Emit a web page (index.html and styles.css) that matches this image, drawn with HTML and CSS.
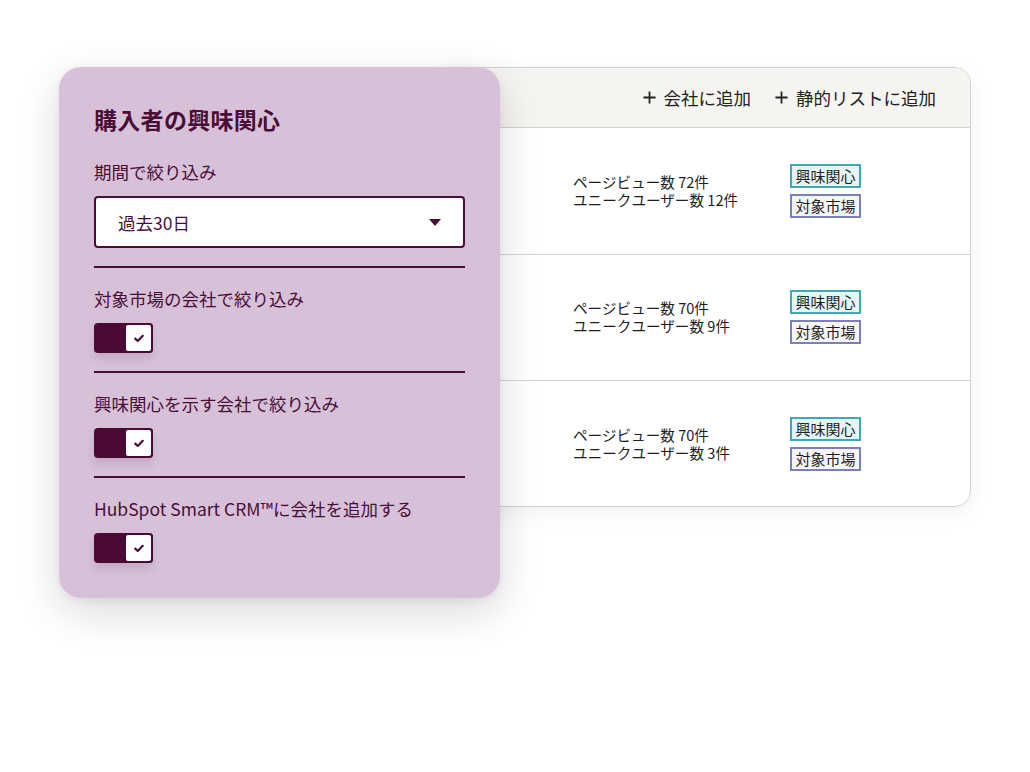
FILE: index.html
```html
<!DOCTYPE html>
<html lang="ja">
<head>
<meta charset="utf-8">
<link rel="stylesheet" href="styles.css">
</head>
<body>
<div class="stage">
  <div class="table-card">
    <div class="table-head">
      <span class="head-action"><svg class="plus" viewBox="0 0 16 16"><path d="M8 1.5v13M1.5 8h13"/></svg>会社に追加</span>
      <span class="head-action"><svg class="plus" viewBox="0 0 16 16"><path d="M8 1.5v13M1.5 8h13"/></svg>静的リストに追加</span>
    </div>
    <div class="row">
      <div class="stats"><div>ページビュー数 72件</div><div>ユニークユーザー数 12件</div></div>
      <div class="tags"><span class="tag tag-interest">興味関心</span><span class="tag tag-market">対象市場</span></div>
    </div>
    <div class="row">
      <div class="stats"><div>ページビュー数 70件</div><div>ユニークユーザー数 9件</div></div>
      <div class="tags"><span class="tag tag-interest">興味関心</span><span class="tag tag-market">対象市場</span></div>
    </div>
    <div class="row last">
      <div class="stats"><div>ページビュー数 70件</div><div>ユニークユーザー数 3件</div></div>
      <div class="tags"><span class="tag tag-interest">興味関心</span><span class="tag tag-market">対象市場</span></div>
    </div>
  </div>

  <div class="panel">
    <h2 class="panel-title">購入者の興味関心</h2>
    <div class="label">期間で絞り込み</div>
    <div class="select">
      <span>過去30日</span>
      <svg class="caret" viewBox="0 0 12 7"><path d="M0 0h12L6 7z"/></svg>
    </div>
    <div class="section">
      <div class="label">対象市場の会社で絞り込み</div>
      <div class="toggle"><span class="knob"><svg viewBox="0 0 12 10"><path d="M1.5 5.2l3 2.8 6-6.2"/></svg></span></div>
    </div>
    <div class="section">
      <div class="label">興味関心を示す会社で絞り込み</div>
      <div class="toggle"><span class="knob"><svg viewBox="0 0 12 10"><path d="M1.5 5.2l3 2.8 6-6.2"/></svg></span></div>
    </div>
    <div class="section">
      <div class="label">HubSpot Smart CRM™に会社を追加する</div>
      <div class="toggle"><span class="knob"><svg viewBox="0 0 12 10"><path d="M1.5 5.2l3 2.8 6-6.2"/></svg></span></div>
    </div>
  </div>
</div>
</body>
</html>
```

FILE: styles.css
```css
* { box-sizing: border-box; }
html, body {
  margin: 0;
  padding: 0;
  background: #ffffff;
}
body {
  font-family: "Noto Sans CJK JP", "Noto Sans", sans-serif;
  width: 1030px;
  height: 772px;
  overflow: hidden;
}
.stage {
  position: relative;
  padding-top: 67px;
}

/* table card */
.table-card {
  margin-left: 440px;
  width: 531px;
  border: 1px solid #d2d2d2;
  border-radius: 16px;
  background: #ffffff;
  overflow: hidden;
  box-shadow: 0 6px 22px rgba(0, 0, 0, 0.06);
}
.table-head {
  height: 60px;
  background: #f5f4f0;
  border-bottom: 1px solid #d2d2d2;
  display: flex;
  justify-content: flex-end;
  align-items: center;
  gap: 23px;
  padding-right: 34px;
  font-size: 17.5px;
  color: #222;
}
.head-action {
  display: flex;
  align-items: center;
  gap: 7px;
}
.plus {
  width: 15px;
  height: 15px;
  stroke: #222;
  stroke-width: 1.9;
  fill: none;
}
.row {
  height: 126.5px;
  border-bottom: 1px solid #d2d2d2;
  display: flex;
  align-items: center;
  padding-left: 132px;
}
.row.last { border-bottom: none; height: 125px; }
.stats {
  width: 217px;
  font-size: 14.6px;
  line-height: 18px;
  color: #1e1e1e;
}
.tags {
  display: flex;
  flex-direction: column;
  gap: 6px;
  align-items: flex-start;
}
.tag {
  display: block;
  width: 71px;
  height: 24px;
  font-size: 15px;
  line-height: 20px;
  text-align: center;
  color: #1e1e1e;
  border: 2px solid;
}
.tag-interest {
  border-color: #41a9b1;
  background: #e4f6f7;
}
.tag-market {
  border-color: #7b80bb;
  background: #f6f5f5;
}

/* panel */
.panel {
  position: absolute;
  left: 59px;
  top: 67px;
  width: 441px;
  background: #d7c1d9;
  border-radius: 22px;
  padding: 37px 35px 35px 35px;
  color: #4a0d36;
  box-shadow: 0 14px 40px rgba(40, 10, 40, 0.16), 0 2px 8px rgba(40, 10, 40, 0.06);
}
.panel-title {
  margin: 0 0 25px 0;
  font-size: 23px;
  line-height: 31px;
  font-weight: 700;
  letter-spacing: 0.3px;
}
.label {
  font-size: 17.5px;
  line-height: 24px;
  margin-bottom: 12px;
}
.select {
  height: 52px;
  background: #ffffff;
  border: 2px solid #4a0d36;
  border-radius: 4px;
  display: flex;
  align-items: center;
  justify-content: space-between;
  padding: 0 22px 0 22px;
  font-size: 17.5px;
  color: #4a0d36;
  margin-bottom: 18px;
}
.caret {
  width: 12px;
  height: 7px;
  fill: #4a0d36;
}
.section {
  border-top: 2px solid #4a0d36;
  padding-top: 19px;
  padding-bottom: 18px;
}
.section:last-child { padding-bottom: 0; }
.toggle {
  width: 59px;
  height: 30px;
  background: #4a0a35;
  border-radius: 4px;
  display: flex;
  justify-content: flex-end;
  box-shadow: 0 6px 8px rgba(60, 20, 60, 0.12);
}
.knob {
  width: 29px;
  height: 30px;
  background: #ffffff;
  border: 2px solid #4a0a35;
  border-radius: 4px;
  display: flex;
  align-items: center;
  justify-content: center;
}
.knob svg {
  width: 10px;
  height: 9px;
  fill: none;
  stroke: #4a0a35;
  stroke-width: 2.6;
  stroke-linecap: round;
  stroke-linejoin: round;
}
```
